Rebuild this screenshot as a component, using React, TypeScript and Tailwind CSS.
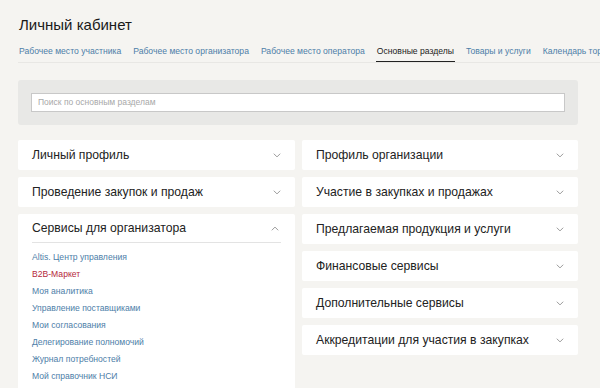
const tabs = [
  "Рабочее место участника",
  "Рабочее место организатора",
  "Рабочее место оператора",
  "Основные разделы",
  "Товары и услуги",
  "Календарь торгов",
];

const leftItems = [
  "Altis. Центр управления",
  "B2B-Маркет",
  "Моя аналитика",
  "Управление поставщиками",
  "Мои согласования",
  "Делегирование полномочий",
  "Журнал потребностей",
  "Мой справочник НСИ",
];

const rightCards = [
  "Профиль организации",
  "Участие в закупках и продажах",
  "Предлагаемая продукция и услуги",
  "Финансовые сервисы",
  "Дополнительные сервисы",
  "Аккредитации для участия в закупках",
];

function Chevron({ up }: { up?: boolean }) {
  return (
    <svg width="8" height="5" viewBox="0 0 8 5" className="shrink-0">
      <path
        d={up ? "M0.8 4.3L4 1.1L7.2 4.3" : "M0.8 0.7L4 3.9L7.2 0.7"}
        fill="none"
        stroke="#9a9a9a"
        strokeWidth="1"
      />
    </svg>
  );
}

function Card({ title }: { title: string }) {
  return (
    <div className="flex h-[30px] items-center justify-between rounded-[2px] bg-white pl-[14px] pr-[14px]">
      <span className="text-[12.2px] text-[#222]">{title}</span>
      <Chevron />
    </div>
  );
}

export default function App() {
  return (
    <div
      className="h-[388px] w-[600px] overflow-hidden bg-[#f5f4f1]"
      style={{ fontFamily: '"Liberation Sans", Arial, sans-serif' }}
    >
      <div className="pl-[19px] pt-[15px]">
        <h1 className="text-[15px] leading-[20px] text-[#1a1a1a]">Личный кабинет</h1>
      </div>
      <div className="ml-[18px] mt-[11px] flex gap-[10px] overflow-hidden whitespace-nowrap border-b border-[#e8e7e4]">
        {tabs.map((t, i) => (
          <div
            key={t}
            className={
              i === 3
                ? "border-b border-[#222] px-[1px] pb-[4px] text-[8.6px] leading-[11px] text-[#222]"
                : "px-[1px] pb-[4px] text-[8.6px] leading-[11px] text-[#4d7ea8]"
            }
          >
            {t}
          </div>
        ))}
      </div>
      <div className="ml-[18px] mt-[17px] w-[560px] rounded-[3px] bg-[#e8e8e6] px-[13px] py-[13px]">
        <div className="flex h-[19px] items-center border border-[#c8c8c8] bg-white pl-[6px] text-[8.5px] text-[#a8a8a8]">
          Поиск по основным разделам
        </div>
      </div>
      <div className="ml-[18px] mt-[15px] grid w-[560px] grid-cols-[277px_276px] gap-x-[7px]">
        <div className="flex flex-col gap-[7px]">
          <Card title="Личный профиль" />
          <Card title="Проведение закупок и продаж" />
          <div className="rounded-[2px] bg-white px-[14px] pb-[10px]">
            <div className="flex h-[29px] items-center justify-between border-b border-[#e3e3e3]">
              <span className="text-[12.2px] text-[#222]">Сервисы для организатора</span>
              <span className="mr-[2px]">
                <Chevron up />
              </span>
            </div>
            <div className="flex flex-col pt-[6px]">
              {leftItems.map((it) => (
                <div
                  key={it}
                  className={
                    it === "B2B-Маркет"
                      ? "h-[17px] text-[8.6px] leading-[17px] text-[#b5283c]"
                      : "h-[17px] text-[8.6px] leading-[17px] text-[#4d7ea8]"
                  }
                >
                  {it}
                </div>
              ))}
            </div>
          </div>
        </div>
        <div className="flex flex-col gap-[7px]">
          {rightCards.map((c) => (
            <Card key={c} title={c} />
          ))}
        </div>
      </div>
    </div>
  );
}
